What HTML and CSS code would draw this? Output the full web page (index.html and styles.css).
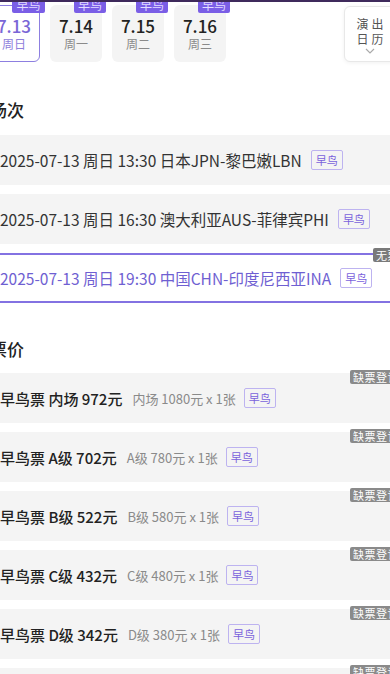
FILE: index.html
```html
<!DOCTYPE html>
<html lang="zh-CN">
<head>
  <meta charset="UTF-8">
  <meta name="viewport" content="width=device-width, initial-scale=1.0">
  <title>选择场次</title>
  <link rel="stylesheet" href="styles.css">
</head>
<body>

  <div class="topbar"></div>

  <div class="page">

    <!-- Date tabs -->
    <div class="date-bar">
      <div class="date-list">
        <div class="date-tab active">
          <span class="tag-solid">早鸟</span>
          <span class="date-day">7.13</span>
          <span class="date-week">周日</span>
        </div>
        <div class="date-tab">
          <span class="tag-solid">早鸟</span>
          <span class="date-day">7.14</span>
          <span class="date-week">周一</span>
        </div>
        <div class="date-tab">
          <span class="tag-solid">早鸟</span>
          <span class="date-day">7.15</span>
          <span class="date-week">周二</span>
        </div>
        <div class="date-tab">
          <span class="tag-solid">早鸟</span>
          <span class="date-day">7.16</span>
          <span class="date-week">周三</span>
        </div>
      </div>
      <button class="calendar-btn">
        <span>演出</span>
        <span>日历</span>
        <svg width="10" height="6" viewBox="0 0 10 6"><path d="M1 1l4 4 4-4" fill="none" stroke="#aaa" stroke-width="1.2"/></svg>
      </button>
    </div>

    <!-- Sessions -->
    <section class="block first">
      <h2 class="block-title">场次</h2>
      <div class="option-list">
        <div class="option-row">
          <span class="session-text">2025-07-13 周日 13:30 日本JPN-黎巴嫩LBN</span>
          <span class="tag-outline">早鸟</span>
        </div>
        <div class="option-row">
          <span class="session-text">2025-07-13 周日 16:30 澳大利亚AUS-菲律宾PHI</span>
          <span class="tag-outline">早鸟</span>
        </div>
        <div class="option-row selected">
          <span class="session-text">2025-07-13 周日 19:30 中国CHN-印度尼西亚INA</span>
          <span class="tag-outline">早鸟</span>
          <span class="corner-tag">无票</span>
        </div>
      </div>
    </section>

    <!-- Prices -->
    <section class="block">
      <h2 class="block-title">票价</h2>
      <div class="option-list">
        <div class="option-row">
          <span class="price-main">早鸟票 内场 972元</span>
          <span class="price-sub">内场 1080元 x 1张</span>
          <span class="tag-outline">早鸟</span>
          <span class="corner-tag">缺票登记</span>
        </div>
        <div class="option-row">
          <span class="price-main">早鸟票 A级 702元</span>
          <span class="price-sub">A级 780元 x 1张</span>
          <span class="tag-outline">早鸟</span>
          <span class="corner-tag">缺票登记</span>
        </div>
        <div class="option-row">
          <span class="price-main">早鸟票 B级 522元</span>
          <span class="price-sub">B级 580元 x 1张</span>
          <span class="tag-outline">早鸟</span>
          <span class="corner-tag">缺票登记</span>
        </div>
        <div class="option-row">
          <span class="price-main">早鸟票 C级 432元</span>
          <span class="price-sub">C级 480元 x 1张</span>
          <span class="tag-outline">早鸟</span>
          <span class="corner-tag">缺票登记</span>
        </div>
        <div class="option-row">
          <span class="price-main">早鸟票 D级 342元</span>
          <span class="price-sub">D级 380元 x 1张</span>
          <span class="tag-outline">早鸟</span>
          <span class="corner-tag">缺票登记</span>
        </div>
        <div class="option-row">
          <span class="price-main">早鸟票 E级 252元</span>
          <span class="price-sub">E级 280元 x 1张</span>
          <span class="tag-outline">早鸟</span>
          <span class="corner-tag">缺票登记</span>
        </div>
      </div>
    </section>

  </div>

</body>
</html>
```

FILE: styles.css
```css
/* Global Styles */
* {
  margin: 0;
  padding: 0;
  box-sizing: border-box;
  font-family: "Noto Sans CJK SC", "Noto Sans", sans-serif;
}

body {
  background-color: #fff;
  color: #222;
  overflow: hidden;
  height: 674px;
}

.topbar {
  position: relative;
  z-index: 2;
  height: 2px;
  background-color: #3f2a5c;
}

.page {
  width: 414px;
  margin-left: -12px;
}

/* Date tabs */
.date-bar {
  display: flex;
  align-items: flex-start;
  padding-top: 3px;
}

.date-list {
  display: flex;
  gap: 10px;
}

.date-tab {
  position: relative;
  width: 52px;
  height: 57px;
  padding-top: 10px;
  display: flex;
  flex-direction: column;
  align-items: center;
  background-color: #f4f4f4;
  border-radius: 6px;
}

.date-tab.active {
  background-color: #fff;
  border: 1.5px solid #8d7fe0;
  padding-top: 8.5px;
}

.date-day {
  font-size: 17px;
  line-height: 21px;
  font-weight: 500;
  color: #222;
}

.date-week {
  font-size: 12px;
  line-height: 16px;
  color: #8a8a8a;
}

.date-tab.active .date-day {
  color: #7a66d6;
}

.date-tab.active .date-week {
  color: #8f80dc;
}

.tag-solid {
  position: absolute;
  top: -9px;
  right: -4px;
  padding: 1px 4px;
  font-size: 12px;
  line-height: 15px;
  color: #e3dcff;
  background-color: #7a5ee6;
  border-radius: 2px;
}

.date-tab.active .tag-solid {
  top: -10.5px;
  right: -5.5px;
}

.calendar-btn {
  margin-left: auto;
  margin-right: 6px;
  margin-top: 1px;
  width: 52px;
  height: 56px;
  display: flex;
  flex-direction: column;
  align-items: center;
  padding-top: 9px;
  background-color: #fff;
  border: 1px solid #e8e8e8;
  border-radius: 6px;
  box-shadow: 0 1px 4px rgba(0, 0, 0, 0.06);
  font-size: 12px;
  line-height: 15px;
  letter-spacing: 3px;
  color: #555;
  cursor: pointer;
}

.calendar-btn span {
  margin-right: -3px;
}

.calendar-btn svg {
  margin-top: 2px;
}

/* Blocks */
.block {
  margin-top: 34px;
}

.block.first {
  margin-top: 36px;
}

.block-title {
  padding-left: 2px;
  margin-bottom: 12px;
  font-size: 17px;
  line-height: 24px;
  font-weight: 500;
  color: #222;
}

.block.first .block-title {
  margin-bottom: 13px;
}

.option-list {
  display: flex;
  flex-direction: column;
  gap: 9px;
}

.option-row {
  position: relative;
  height: 50px;
  display: flex;
  align-items: center;
  padding-left: 12px;
  background-color: #f4f4f4;
  white-space: nowrap;
}

.option-row.selected {
  background-color: #fff;
  border: 2px solid #8372e2;
  padding-left: 10px;
}

.session-text {
  font-size: 15.5px;
  color: #333;
  margin-right: 9px;
}

.option-row.selected .session-text {
  color: #6f5fd2;
}

.price-main {
  font-size: 15px;
  font-weight: 500;
  color: #222;
  margin-right: 10px;
}

.price-sub {
  font-size: 13px;
  color: #8a8a8a;
  margin-right: 8px;
}

.tag-outline {
  padding: 1px 4px;
  font-size: 11px;
  line-height: 16px;
  color: #7a62dc;
  border: 1px solid #bdb3f0;
  border-radius: 2px;
}

.corner-tag {
  position: absolute;
  top: -3px;
  right: 0;
  padding: 0 3px;
  font-size: 11px;
  line-height: 14px;
  letter-spacing: 0.5px;
  color: #fff;
  background-color: #8a8a8a;
  border-radius: 2px;
}

.option-row.selected .corner-tag {
  top: -7px;
  right: -2px;
  background-color: #7a7a7a;
}
```
